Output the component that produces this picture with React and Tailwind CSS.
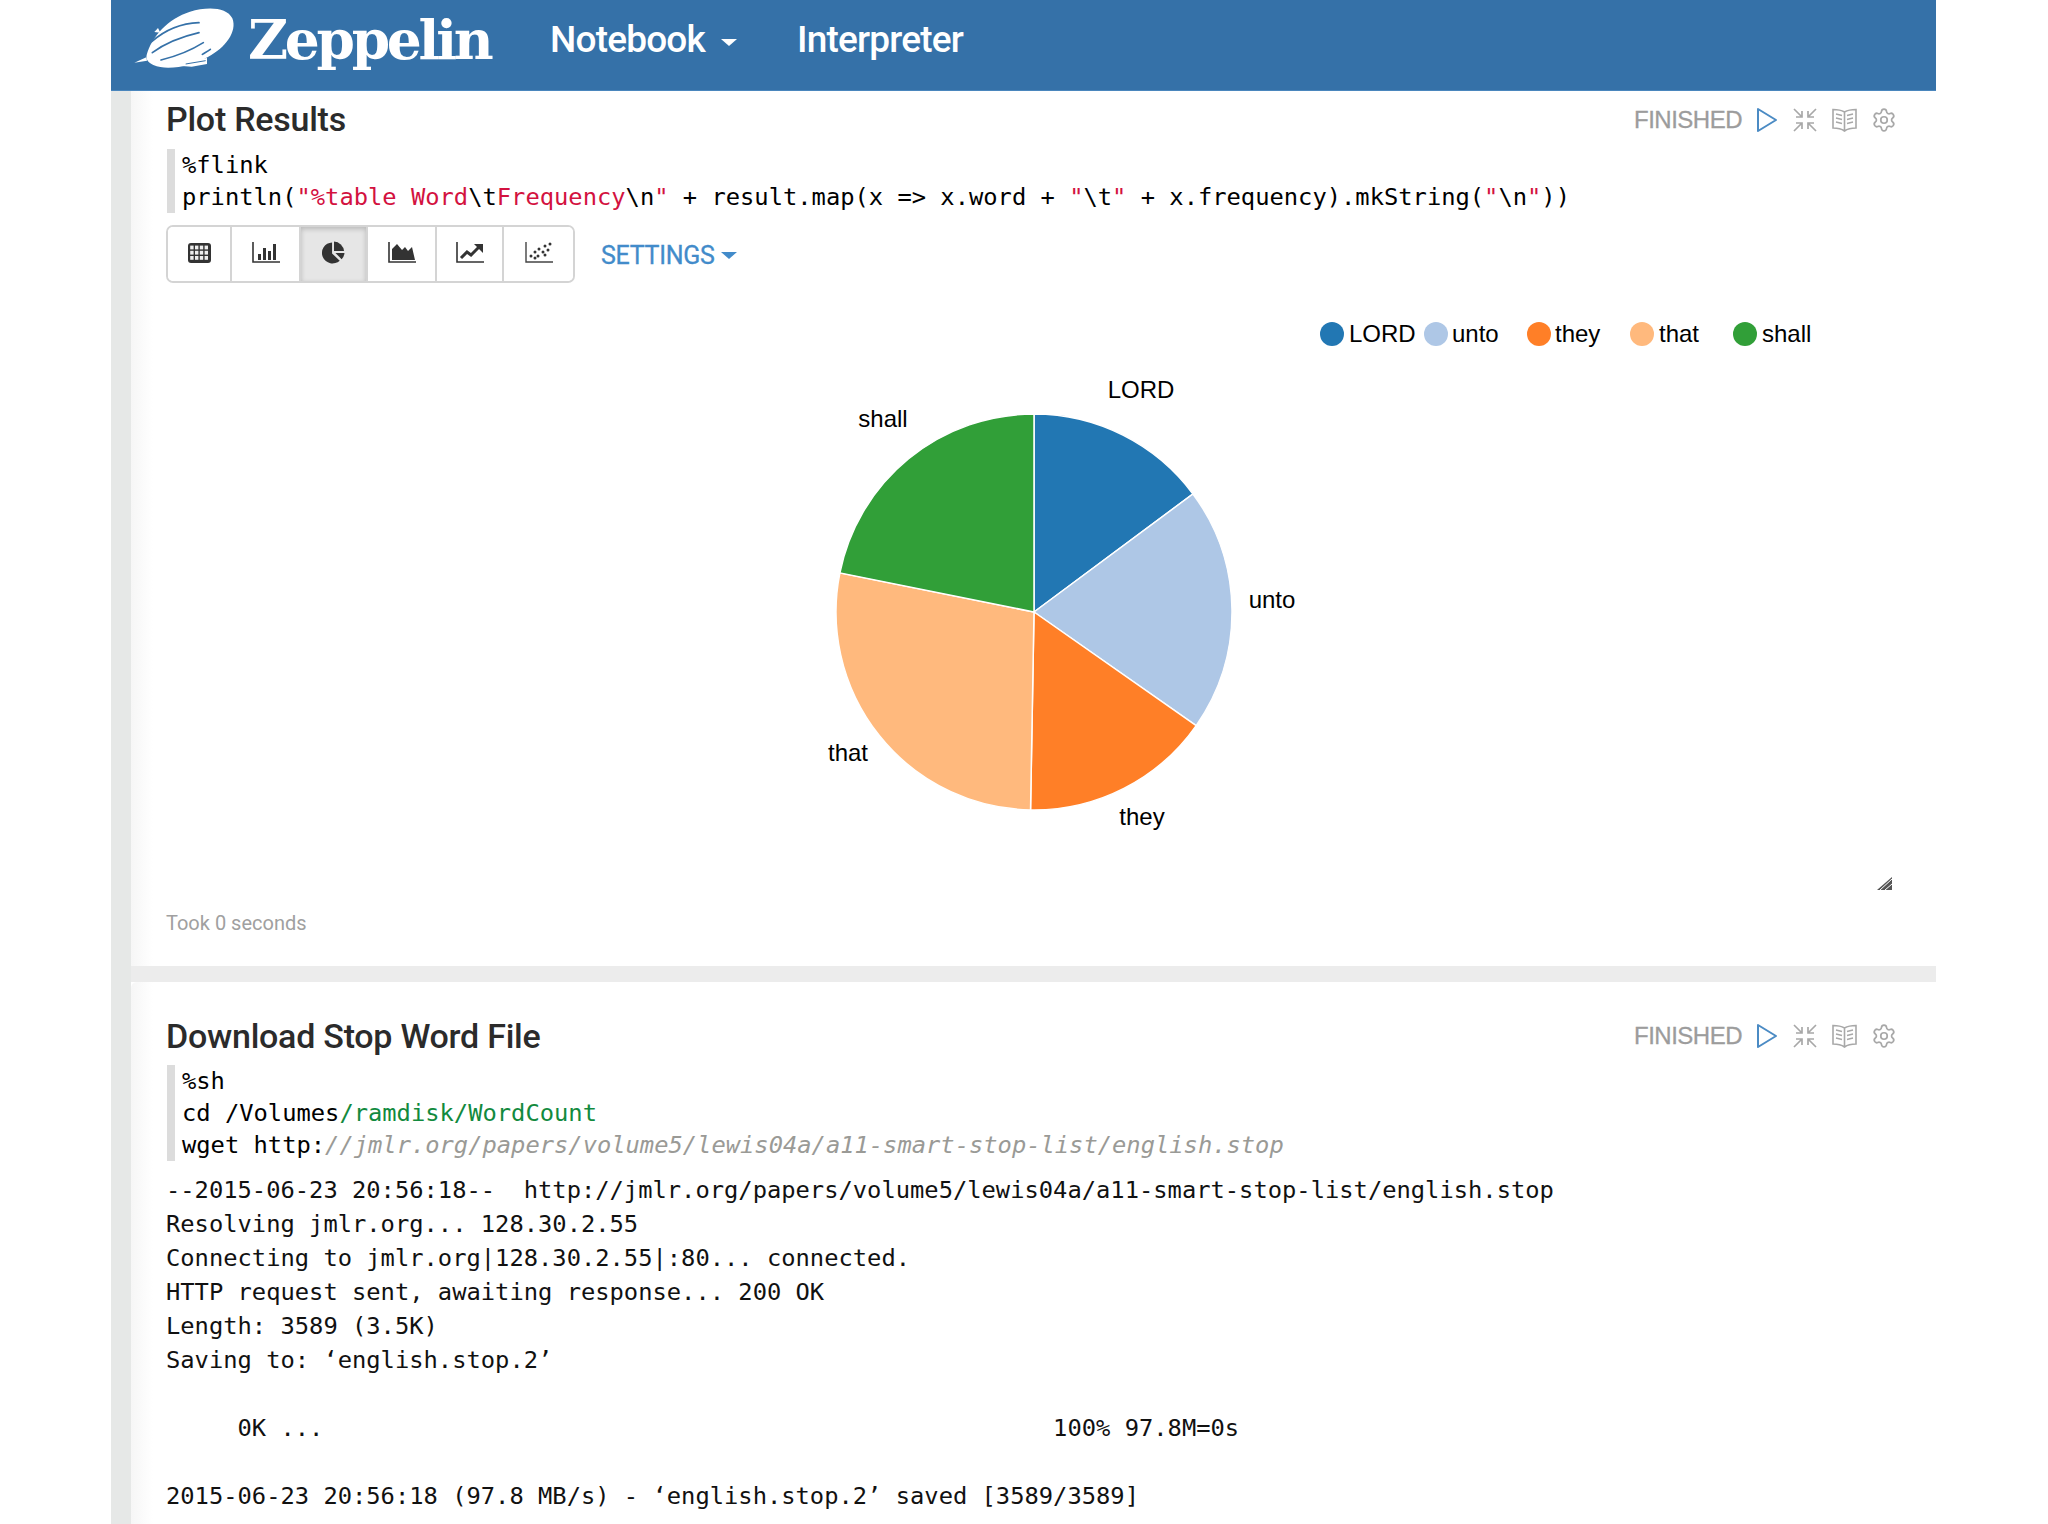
import { Settings } from "lucide-react";

const sans = "font-['Roboto',sans-serif]";
const mono = "font-['DejaVu_Sans_Mono',monospace]";

const legend = [
    { label: "LORD", color: "#2277b3", cx: 1332, tx: 1349 },
    { label: "unto", color: "#aec7e6", cx: 1436, tx: 1452 },
    { label: "they", color: "#ff7f27", cx: 1539, tx: 1555 },
    { label: "that", color: "#ffb97d", cx: 1642, tx: 1659 },
    { label: "shall", color: "#319f38", cx: 1745, tx: 1762 },
];

const slices = [
    { color: "#2277b3", from: 0, to: 53.4 },
    { color: "#aec7e6", from: 53.4, to: 125 },
    { color: "#ff7f27", from: 125, to: 181 },
    { color: "#ffb97d", from: 181, to: 281.4 },
    { color: "#319f38", from: 281.4, to: 360 },
];

const pieLabels = [
    { label: "LORD", x: 1141, y: 390 },
    { label: "unto", x: 1272, y: 600 },
    { label: "they", x: 1142, y: 817 },
    { label: "that", x: 848, y: 753 },
    { label: "shall", x: 883, y: 419 },
];

function slicePath(from, to) {
    const cx = 1034, cy = 612, r = 198;
    const pt = (a) => {
        const rad = (a * Math.PI) / 180;
        return `${cx + r * Math.sin(rad)} ${cy - r * Math.cos(rad)}`;
    };
    return `M${cx} ${cy} L${pt(from)} A${r} ${r} 0 ${to - from > 180 ? 1 : 0} 1 ${pt(to)} Z`;
}

function Logo() {
    return (
        <svg width="130" height="85" viewBox="0 0 390 255" className="shrink-0 self-start">
            <path d="M65 165 C80 110 130 55 195 35 C245 20 305 20 322 55 C338 95 300 145 250 170 C205 195 130 215 85 195 C70 188 62 178 65 165 Z" fill="#fff" />
            <path d="M28 188 L64 172 L66 182 Z" fill="#fff" />
            <path d="M88 96 L99 84 L106 98 Z" fill="#fff" />
            <g fill="none" stroke="#3571a8" strokeWidth="5" strokeLinecap="round">
                <path d="M80 125 C120 90 170 70 222 68" />
                <path d="M82 158 C120 130 170 110 222 98" />
                <path d="M108 180 C150 170 200 150 235 128" />
                <path d="M232 163 C240 158 248 154 256 148" />
            </g>
            <path d="M170 198 L205 180 L246 174 L246 192 L200 200 Z" fill="#fff" />
            <path d="M182 192 L242 182" stroke="#3571a8" strokeWidth="3" fill="none" />
        </svg>
    );
}

function Caret({ className }) {
    return <span className={`inline-block w-0 h-0 border-x-[8px] border-x-transparent border-t-[7px] ${className}`} />;
}

function ParagraphControls() {
    return (
        <div className="flex items-center absolute left-[1503px] top-0 h-full">
            <span className="font-['Liberation_Sans',sans-serif] text-[24px] text-[#9c9c9c] tracking-[-0.5px] w-[121px] [-webkit-text-stroke:0.3px_#9c9c9c]">FINISHED</span>
            <svg width="24" height="26" viewBox="0 0 24 26" className="mr-[14px]" fill="none" stroke="#4b8bc4" strokeWidth="2" strokeLinejoin="round">
                <path d="M3 2 L21 13 L3 24 Z" />
            </svg>
            <svg width="24" height="24" viewBox="0 0 24 24" className="mr-[15px]" fill="none" stroke="#a8a8a8" strokeWidth="1.7">
                <path d="M1 1 L9 9 M9 3 V9 H3 M23 1 L15 9 M15 3 V9 H21 M1 23 L9 15 M3 15 H9 V21 M23 23 L15 15 M21 15 H15 V21" />
            </svg>
            <svg width="25" height="24" viewBox="0 0 25 24" className="mr-[14px]" fill="none" stroke="#a8a8a8" strokeWidth="1.6">
                <path d="M12.5 4 C9 2 5 1.5 1 1.5 V20 C5 20 9 20.5 12.5 23 C16 20.5 20 20 24 20 V1.5 C20 1.5 16 2 12.5 4 Z M12.5 4 V23" />
                <path d="M4 6 L10 7.5 M4 10 L10 11.5 M4 14 L10 15.5 M15 7.5 L21 6 M15 11.5 L21 10 M15 15.5 L21 14" strokeWidth="1.3" />
            </svg>
            <Settings size={26} color="#a8a8a8" strokeWidth={1.6} />
        </div>
    );
}

function TableIcon() {
    const cells = [];
    for (let r = 0; r < 3; r++) {
        for (let c = 0; c < 4; c++) cells.push(<rect key={`${r}-${c}`} x={2.2 + c * 4.8} y={2.6 + r * 5.2} width="3.4" height="3.8" fill="#eee" />);
    }
    return (
        <svg width="23" height="20" viewBox="0 0 23 20">
            <rect width="23" height="20" rx="3" fill="#333" />
            {cells}
        </svg>
    );
}

function BarIcon() {
    return (
        <svg width="28" height="21" viewBox="0 0 28 21" fill="#333">
            <path d="M1 0 V20 H28" fill="none" stroke="#333" strokeWidth="1.6" />
            <rect x="6" y="12" width="3" height="6" />
            <rect x="11" y="6" width="3" height="12" />
            <rect x="16" y="9" width="3" height="9" />
            <rect x="21" y="2" width="3" height="16" />
        </svg>
    );
}

function PieIcon() {
    return (
        <svg width="23" height="23" viewBox="0 0 24 24" fill="#333">
            <path d="M10.5 1.5 V13 L18.5 20.5 A11 11 0 1 1 10.5 1.5 Z" />
            <path d="M12.5 0.5 A11 11 0 0 1 23 10.5 H12.5 Z" />
            <path d="M14 12.5 H23.5 A11 11 0 0 1 20.5 19 Z" />
        </svg>
    );
}

function AreaIcon() {
    return (
        <svg width="28" height="21" viewBox="0 0 28 21" fill="#333">
            <path d="M1 0 V20 H28" fill="none" stroke="#333" strokeWidth="1.6" />
            <path d="M4 18 V7 L9 2 L14 8 L17 5 L20 9 L24 5 L27 18 Z" />
        </svg>
    );
}

function LineIcon() {
    return (
        <svg width="28" height="21" viewBox="0 0 28 21">
            <path d="M1 0 V20 H28" fill="none" stroke="#333" strokeWidth="1.6" />
            <path d="M5 16 L11 10 L15 13 L23 5" fill="none" stroke="#333" strokeWidth="3" />
            <path d="M18 2 H27 V11 Z" fill="#333" />
        </svg>
    );
}

function ScatterIcon() {
    const dots = [[6, 14], [10, 10], [13, 14], [14, 7], [18, 10], [20, 4], [23, 8], [25, 2], [10, 16], [20, 13]];
    return (
        <svg width="28" height="21" viewBox="0 0 28 21">
            <path d="M1 0 V20 H28" fill="none" stroke="#444" strokeWidth="1.4" />
            {dots.map(([x, y]) => <circle key={`${x}-${y}`} cx={x} cy={y} r="1.5" fill="#333" />)}
        </svg>
    );
}

function Toolbar() {
    const buttons = [
        { w: "w-[64px]", icon: <TableIcon /> },
        { w: "w-[69px]", icon: <BarIcon /> },
        { w: "w-[67px]", icon: <PieIcon />, active: true },
        { w: "w-[69px]", icon: <AreaIcon /> },
        { w: "w-[67px]", icon: <LineIcon /> },
        { w: "w-[69px]", icon: <ScatterIcon /> },
    ];
    return (
        <div className="flex items-center mt-3 ml-[35px] h-[58px]">
            <div className="flex h-full border-2 border-[#d4d4d4] rounded-[7px] overflow-hidden">
                {buttons.map((b, i) => (
                    <div
                        key={i}
                        className={`flex items-center justify-center pb-[3px] ${b.w} ${i < 5 ? "border-r-2 border-[#d4d4d4]" : ""} ${b.active ? "bg-[#e6e6e6] shadow-[inset_0_2px_5px_rgba(0,0,0,0.2)]" : "bg-white"}`}
                    >
                        {b.icon}
                    </div>
                ))}
            </div>
            <span className={`${sans} text-[25px] text-[#428bca] ml-[26px] mt-[3px] tracking-[-0.3px] [-webkit-text-stroke:0.3px_#428bca]`}>SETTINGS</span>
            <Caret className="ml-[7px] mt-[3px] border-t-[#428bca]" />
        </div>
    );
}

function PieChart() {
    return (
        <svg width="1805" height="617" viewBox="131 283 1805 617" className="block">
            <g fontFamily="Liberation Sans, sans-serif" fontSize="24" fill="#000">
                {legend.map((l) => (
                    <g key={l.label}>
                        <circle cx={l.cx} cy="334" r="12" fill={l.color} />
                        <text x={l.tx} y="342">{l.label}</text>
                    </g>
                ))}
                {slices.map((s) => (
                    <path key={s.color} d={slicePath(s.from, s.to)} fill={s.color} stroke="#fff" strokeWidth="1.5" />
                ))}
                {pieLabels.map((l) => (
                    <text key={l.label} x={l.x} y={l.y + 8} textAnchor="middle">{l.label}</text>
                ))}
            </g>
            <path d="M1877 890 L1892 877 L1892 890 Z" fill="#555" />
            <path d="M1880 890 L1892 879 M1885 890 L1892 884" stroke="#fff" strokeWidth="1" />
        </svg>
    );
}

function CodeBlock({ children }) {
    return (
        <div className={`${mono} ml-9 pl-[7px] border-l-8 border-[#dcdcdc] text-[23.78px] leading-8 text-black whitespace-pre`}>
            {children}
        </div>
    );
}

const wgetLines = [
    "--2015-06-23 20:56:18--  http://jmlr.org/papers/volume5/lewis04a/a11-smart-stop-list/english.stop",
    "Resolving jmlr.org... 128.30.2.55",
    "Connecting to jmlr.org|128.30.2.55|:80... connected.",
    "HTTP request sent, awaiting response... 200 OK",
    "Length: 3589 (3.5K)",
    "Saving to: ‘english.stop.2’",
    " ",
    "     0K ...                                                   100% 97.8M=0s",
    " ",
    "2015-06-23 20:56:18 (97.8 MB/s) - ‘english.stop.2’ saved [3589/3589]",
];

export default function App() {
    return (
        <div className="w-[2048px] h-[1524px] overflow-hidden bg-white pl-[111px]">
            <div className="w-[1825px]">
                {/* Navbar */}
                <div className="h-[91px] bg-[#3571a8] flex items-center text-white pl-[14px] pb-[10px] border-b border-[#4a86bd]">
                    <Logo />
                    <span className="font-['DejaVu_Serif',serif] font-bold text-[55px] tracking-[-3.3px] -ml-[7px] w-[302px]">Zeppelin</span>
                    <span className={`${sans} font-medium text-[37px] tracking-[-0.8px]`}>Notebook</span>
                    <Caret className="ml-[16px] mt-1 border-t-white" />
                    <span className={`${sans} font-medium text-[37px] tracking-[-0.8px] ml-[60px]`}>Interpreter</span>
                </div>

                <div className="flex h-[1433px]">
                    <div className="w-5 shrink-0 bg-[#e6e8e7]" />
                    <div className="flex-1">
                        {/* Plot paragraph */}
                        <div className="h-[875px] bg-gradient-to-r from-[#f6f6f6] to-white to-[1.2%]">
                            <div className="relative h-[58px] flex items-center pl-[35px] pb-px">
                                <h2 className={`${sans} font-medium text-[34px] text-[#2b2b2b] tracking-[-0.25px]`}>Plot Results</h2>
                                <ParagraphControls />
                            </div>
                            <CodeBlock>
                                <div>%flink</div>
                                <div>
                                    println(<span className="text-[#d3123f]">"%table Word</span>\t<span className="text-[#d3123f]">Frequency</span>\n<span className="text-[#d3123f]">"</span> + result.map(x =&gt; x.word + <span className="text-[#d3123f]">"</span>\t<span className="text-[#d3123f]">"</span> + x.frequency).mkString(<span className="text-[#d3123f]">"</span>\n<span className="text-[#d3123f]">"</span>))
                                </div>
                            </CodeBlock>
                            <Toolbar />
                            <PieChart />
                            <div className={`${sans} h-[46px] flex items-center pl-[35px] text-[20px] text-[#a0a0a0]`}>Took 0 seconds</div>
                        </div>

                        <div className="h-4 bg-[#ececec]" />

                        {/* Shell paragraph */}
                        <div className="h-[542px] pt-[25px] bg-gradient-to-r from-[#f6f6f6] to-white to-[1.2%] rounded-tl-md">
                            <div className="relative h-[58px] flex items-center pl-[35px]">
                                <h2 className={`${sans} font-medium text-[34px] text-[#2b2b2b] tracking-[-0.25px]`}>Download Stop Word File</h2>
                                <ParagraphControls />
                            </div>
                            <CodeBlock>
                                <div>%sh</div>
                                <div>cd /Volumes<span className="text-[#128a3e]">/ramdisk/WordCount</span></div>
                                <div>wget http:<span className="italic text-[#9a9a96]">//jmlr.org/papers/volume5/lewis04a/a11-smart-stop-list/english.stop</span></div>
                            </CodeBlock>
                            <div className={`${mono} mt-3 pl-[35px] text-[23.78px] leading-[34px] text-[#111] whitespace-pre`}>
                                {wgetLines.map((line, i) => <div key={i}>{line}</div>)}
                            </div>
                        </div>
                    </div>
                </div>
            </div>
        </div>
    );
}
